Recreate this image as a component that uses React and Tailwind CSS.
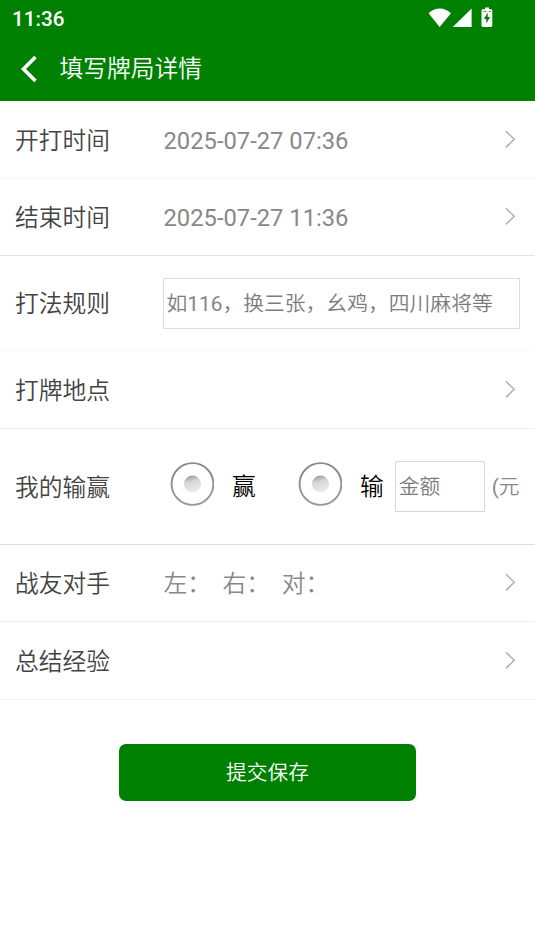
import React, { useState } from "react";

const Chevron = () => (
  <svg className="w-3 h-5 shrink-0 mr-[4px] -translate-y-px" viewBox="0 0 12 20" fill="none">
    <path d="M1.9 2.2 L10.2 10.3 L1.9 18.4" stroke="#b0b0b0" strokeWidth="1.5" />
  </svg>
);

const Row = ({ label, className, arrow, children }) => (
  <div className={`flex items-center border-b px-[15px] ${className}`}>
    <div className="w-[148px] shrink-0 pt-0.5 text-[#444] font-[350]">{label}</div>
    <div className="flex-1 flex items-center text-[#888] whitespace-pre">{children}</div>
    {arrow && <Chevron />}
  </div>
);

const Radio = ({ checked, onClick }) => (
  <button type="button" onClick={onClick} className="w-11 h-11 mb-[5px] shrink-0">
    <svg className="w-11 h-11" viewBox="0 0 44 44">
      <defs>
        <linearGradient id="ring" x1="0" y1="0" x2="0" y2="1">
          <stop offset="0" stopColor="#888" />
          <stop offset="1" stopColor="#999" />
        </linearGradient>
        <linearGradient id="dot" x1="0.35" y1="0" x2="0.6" y2="1">
          <stop offset="0" stopColor="#999" />
          <stop offset="0.35" stopColor="#d6d6d6" />
          <stop offset="1" stopColor="#ececec" />
        </linearGradient>
      </defs>
      <circle cx="22.5" cy="22" r="20.9" fill="#fff" stroke="url(#ring)" strokeWidth="1.9" />
      <circle cx="22.5" cy="22" r="8.5" fill={checked ? "green" : "url(#dot)"} />
    </svg>
  </button>
);

const StatusBar = () => (
  <div className="h-9 flex items-center justify-between pl-[12px] pr-[39px]">
    <span className="text-[20.7px] font-medium leading-none pt-0.5">11:36</span>
    <svg className="w-[67px] h-6" viewBox="0 0 67 24" fill="#fff">
      <path d="M-0.5 7.2 Q11 -2 22 7.2 L10.6 21 Z" />
      <path d="M23.8 21 L42.6 2.6 V21 Z" />
      <path d="M56 1.5 h4 v1.8 h2 q1.3 0 1.3 1.3 v15 q0 1.4 -1.4 1.4 h-8 q-1.4 0 -1.4 -1.4 v-15 q0 -1.3 1.3 -1.3 h2.2 z" />
      <path d="M58.7 6.5 L54.9 13 H57.3 V17.5 L61.1 11 H58.7 Z M54.5 5.3 h3 v0.8 h-3 z M59.8 5.3 h2 v0.8 h-2 z" fill="green" />
    </svg>
  </div>
);

const App = () => {
  const [result, setResult] = useState("");
  const [rule, setRule] = useState("");

  return (
    <div className="min-h-[951px] bg-white text-[23.75px] leading-[34px] font-['Roboto','Noto_Sans_CJK_SC',sans-serif]">
      <header className="h-[101px] bg-[green] text-white">
        <StatusBar />
        <div className="h-[65px] flex items-center pl-[19px]">
          <svg className="w-5 h-7" viewBox="0 0 20 28" fill="none">
            <path d="M16.5 2 L4.5 14 L16.5 26" stroke="#fff" strokeWidth="3.6" />
          </svg>
          <h1 className="pl-[20.5px] pt-px font-[350]">填写牌局详情</h1>
        </div>
      </header>

      <Row label="开打时间" className="h-[78px] border-[#f8f8f8]" arrow>
        <span className="pl-[0.5px] pt-0.5">2025-07-27 07:36</span>
      </Row>
      <Row label="结束时间" className="h-[77px] border-[#e2e2e2]" arrow>
        <span className="pl-[0.5px] pt-0.5">2025-07-27 11:36</span>
      </Row>
      <Row label="打法规则" className="h-[95px] border-[#f7f7f7]">
        <div className="relative w-full">
          <input
            type="text"
            value={rule}
            onChange={(e) => setRule(e.target.value)}
            className="block w-full h-[51px] px-[3px] border border-[#dcdcdc] text-[20.8px] outline-none"
          />
          {/* hint is its own span so the digits keep the regular weight */}
          {!rule && (
            <span className="absolute left-[3.5px] top-[9px] text-[20.8px] text-[#7c7c7c] font-[350] pointer-events-none">
              如<span className="font-normal text-[#858585]">116</span>，换三张，幺鸡，四川麻将等
            </span>
          )}
        </div>
      </Row>
      <Row label="打牌地点" className="h-[78px] border-[#eee]" arrow />
      <Row label="我的输赢" className="h-[116px] border-[#e0e0e0]">
        <div className="flex items-center pl-[7px] text-black">
          <Radio checked={result === "win"} onClick={() => setResult("win")} />
          <span className="w-[84px] pl-[18px] pt-px font-[350]">赢</span>
          <Radio checked={result === "lose"} onClick={() => setResult("lose")} />
          <span className="pl-[18px] pt-px font-[350]">输</span>
        </div>
        <input
          type="text"
          placeholder="金额"
          className="w-[90px] h-[51px] ml-[11px] mr-[7px] px-[3px] pt-px border border-[#d6d6d6] rounded-[1px] text-[20.7px] font-[350] placeholder:text-[#7c7c7c] outline-none"
        />
        <span className="pt-px text-[20.7px] font-[350]">
          <span className="font-normal">(</span>元
        </span>
      </Row>
      <Row label="战友对手" className="h-[77px] border-[#f2f2f2]" arrow>
        <span className="pl-[0.5px] pt-0.5 font-[350]">{"左：  右：  对："}</span>
      </Row>
      <Row label="总结经验" className="h-[78px] border-[#f2f2f2]" arrow />

      <button
        type="button"
        className="block w-[297px] h-[56.5px] pt-px mt-11 mx-auto rounded-[7px] bg-[green] text-white text-[20.7px] font-[350]"
      >
        提交保存
      </button>
    </div>
  );
};

export default App;
